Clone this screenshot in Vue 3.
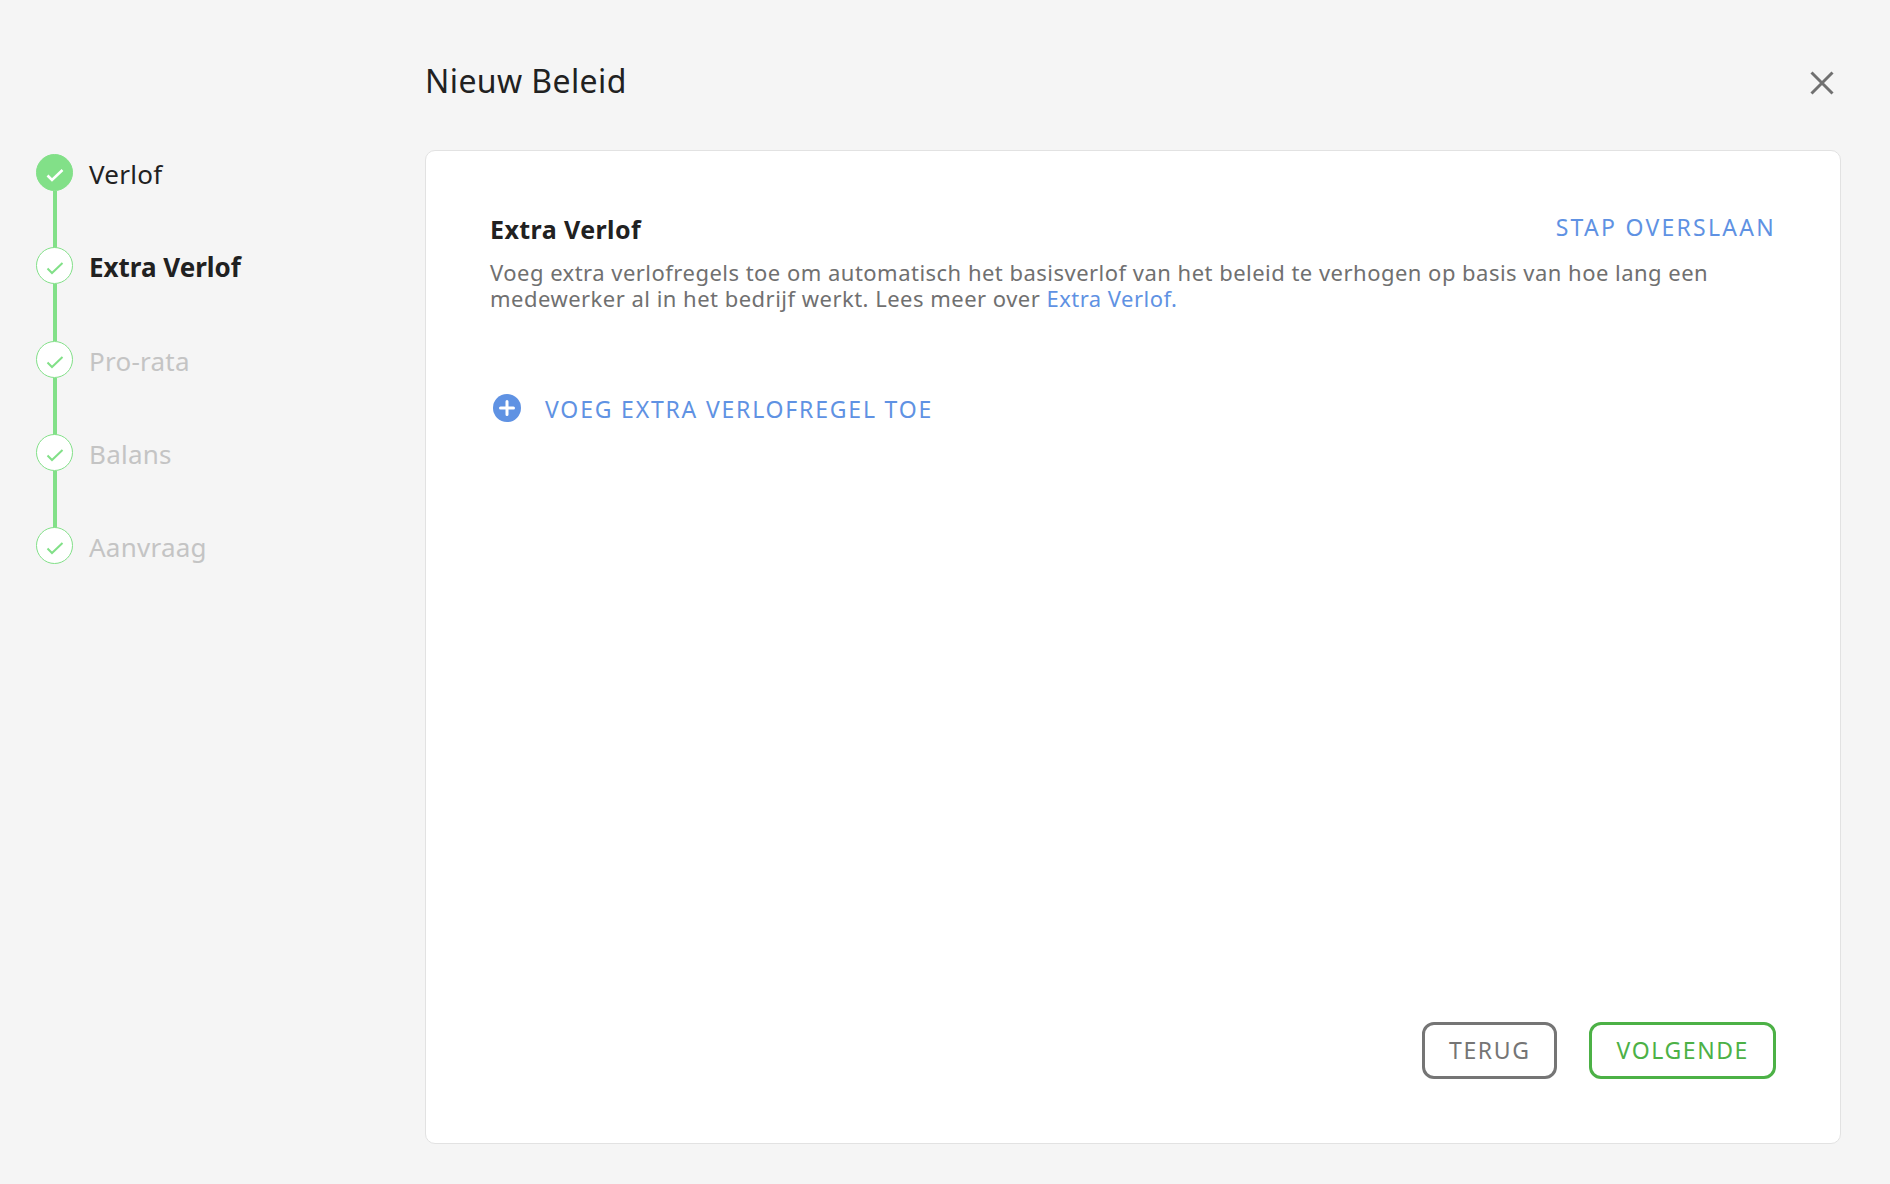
<script setup>
const steps = [
  { label: 'Verlof', state: 'done' },
  { label: 'Extra Verlof', state: 'active' },
  { label: 'Pro-rata', state: 'todo' },
  { label: 'Balans', state: 'todo' },
  { label: 'Aanvraag', state: 'todo' }
]
</script>

<template>
  <div class="page">
    <aside class="side">
      <ol class="steps">
        <li v-for="(s, i) in steps" :key="s.label" class="step" :class="s.state">
          <span class="dot">
            <svg width="20" height="16" viewBox="0 0 20 16"><path d="M2.5 8.5 L7 13 L17.5 3" fill="none" stroke="currentColor" :stroke-width="s.state === 'done' ? 2.6 : 2" /></svg>
          </span>
          <span v-if="i < steps.length - 1" class="line"></span>
          <span class="label">{{ s.label }}</span>
        </li>
      </ol>
    </aside>
    <main class="main">
      <header class="head">
        <h1>Nieuw Beleid</h1>
        <button class="close" aria-label="Sluiten">
          <svg width="24" height="24" viewBox="0 0 24 24"><path d="M1.5 1.5 L22.5 22.5 M22.5 1.5 L1.5 22.5" stroke="#707070" stroke-width="3" fill="none" /></svg>
        </button>
      </header>
      <section class="card">
        <div class="top">
          <h2>Extra Verlof</h2>
          <a class="skip">STAP OVERSLAAN</a>
        </div>
        <p class="desc">Voeg extra verlofregels toe om automatisch het basisverlof van het beleid te verhogen op basis van hoe lang een medewerker al in het bedrijf werkt. Lees meer over <a>Extra Verlof.</a></p>
        <div class="add">
          <svg width="28" height="28" viewBox="0 0 28 28"><circle cx="14" cy="14" r="14" fill="#5f92e3" /><path d="M14 7.5 V20.5 M7.5 14 H20.5" stroke="#fff" stroke-width="3" stroke-linecap="round" /></svg>
          <span>VOEG EXTRA VERLOFREGEL TOE</span>
        </div>
        <div class="actions">
          <button class="btn back">TERUG</button>
          <button class="btn next">VOLGENDE</button>
        </div>
      </section>
    </main>
  </div>
</template>

<style>
html, body { margin: 0; background: #f5f5f5; }
</style>

<style scoped>
.page {
  width: 1890px;
  height: 1184px;
  display: flex;
  background: #f5f5f5;
  font-family: "Noto Sans", "Open Sans", sans-serif;
  box-sizing: border-box;
}
.side { width: 425px; flex: none; padding: 154px 0 0 36px; box-sizing: border-box; }
.steps { list-style: none; margin: 0; padding: 0; }
.step { position: relative; height: 93.3px; display: flex; align-items: flex-start; }
.dot {
  width: 37px; height: 37px; border-radius: 50%;
  border: 1px solid #82e088; background: #fff; color: #82e088;
  box-sizing: border-box; display: flex; align-items: center; justify-content: center;
  flex: none; padding-top: 5px;
}
.done .dot { background: #82e088; color: #fff; }
.line { position: absolute; left: 17px; top: 37px; width: 4px; height: 57px; background: #82e088; }
.label { margin-left: 16px; padding-top: 2px; font-size: 26px; line-height: 37px; color: #c4c4c4; letter-spacing: 0.25px; }
.done .label { color: #212121; }
.active .label { color: #212121; font-weight: 700; letter-spacing: 0; }

.main { width: 1416px; flex: none; padding-top: 60px; }
.head { height: 90px; display: flex; justify-content: space-between; align-items: flex-start; }
h1 { margin: 0; font-size: 32px; line-height: 42px; font-weight: 400; color: #212121; letter-spacing: 0.4px; }
.close { border: 0; background: none; padding: 0; margin: 11px 7px 0 0; width: 24px; height: 24px; }
.card {
  position: relative;
  height: 994px;
  box-sizing: border-box;
  background: #fff;
  border: 1px solid #e2e2e2;
  border-radius: 10px;
  padding: 62px 64px 0;
}
.top { display: flex; justify-content: space-between; align-items: flex-start; height: 37px; }
h2 { margin: 0; font-size: 25px; line-height: 32px; font-weight: 700; color: #212121; letter-spacing: 0.42px; }
.skip { font-size: 23px; line-height: 30px; letter-spacing: 2.27px; margin-top: -1px; color: #5f92e3; }
.desc { margin: 9px 0 0; font-size: 22px; line-height: 26px; color: #707070; width: 1286px; letter-spacing: 0.48px; }
.desc a { color: #5f92e3; }
.add { margin-top: 81px; display: flex; align-items: center; gap: 24px; padding-left: 3px; color: #5f92e3; font-size: 23px; letter-spacing: 1.8px; }
.add span { position: relative; top: 1px; }
.actions { position: absolute; right: 64px; bottom: 64px; display: flex; gap: 32px; }
.btn {
  height: 57px; border-radius: 12px; background: #fff; border: 3px solid #757575; color: #757575;
  font: 400 23px "Noto Sans", sans-serif; letter-spacing: 1.6px; padding: 0 24px 2px;
}
.next { border-color: #4cb146; color: #4cb146; }
</style>
